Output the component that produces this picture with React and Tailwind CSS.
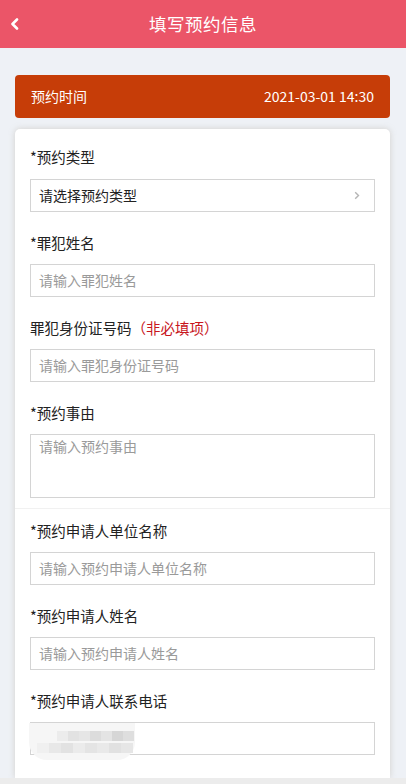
import React from 'react';

const FONT = { fontFamily: '"Noto Sans CJK SC", "Noto Sans", sans-serif' };

const BLUR_TOP = ['#ececec', '#e2e2e2', '#e6e6e6', '#dcdcdc', '#e4e4e4', '#d6d6d6', '#dedede'];
const BLUR_BOTTOM = ['#f0f0f0', '#e8e8e8', '#e2e2e2', '#ebebeb', '#e4e4e4', '#e9e9e9', '#e1e1e1', '#e6e6e6'];

const Field = ({ label, optional, placeholder, className = '' }) => (
  <div className={className}>
    <p className="text-[14.5px] leading-[20px] text-[#222]">
      {label}
      {optional && <span className="text-[#c8161d]">（非必填项）</span>}
    </p>
    <div className="mt-[11px] flex h-[33px] items-center border border-[#d4d4d4] bg-white px-[8px] text-[14px] text-[#9a9a9a]">
      {placeholder}
    </div>
  </div>
);

const App = () => {
  return (
    <div className="flex min-h-[784px] w-[406px] flex-col bg-[#eef1f6]" style={FONT}>
      <header className="relative flex h-[48px] items-center justify-center bg-[#eb5568] text-white">
        <svg className="absolute left-[10px] top-[18px]" width="10" height="12" viewBox="0 0 10 12">
          <path d="M7 1.5 L2.5 6 L7 10.5" fill="none" stroke="white" strokeWidth="2.6" strokeLinecap="round" strokeLinejoin="round" />
        </svg>
        <h1 className="text-[17.5px] font-normal tracking-[0.5px]">填写预约信息</h1>
      </header>

      <div className="px-[15px] pt-[27px]">
        <div className="mr-[1px] flex h-[43px] items-center justify-between rounded-[4px] bg-[#c63d08] px-[16px] text-[14px] text-white">
          <span>预约时间</span>
          <span>2021-03-01 14:30</span>
        </div>
      </div>

      <section className="ml-[15px] mr-[16px] mt-[11px] flex-1 rounded-t-[5px] bg-white shadow-[0_0_6px_rgba(160,150,130,0.35)]">
        <div className="px-[15px] pb-[10px] pt-[18px]">
          <p className="text-[14.5px] leading-[20px] text-[#222]">*预约类型</p>
          <div className="mt-[12px] flex h-[33px] items-center justify-between border border-[#d4d4d4] bg-white pl-[8px] pr-[14px] text-[14px] text-[#222]">
            <span>请选择预约类型</span>
            <svg width="6" height="9" viewBox="0 0 6 9">
              <path d="M1.2 1.2 L4.5 4.5 L1.2 7.8" fill="none" stroke="#b5b5b5" strokeWidth="1.4" />
            </svg>
          </div>

          <Field className="mt-[21px]" label="*罪犯姓名" placeholder="请输入罪犯姓名" />
          <Field className="mt-[21px]" label="罪犯身份证号码" optional placeholder="请输入罪犯身份证号码" />

          <div className="mt-[21px]">
            <p className="text-[14.5px] leading-[20px] text-[#222]">*预约事由</p>
            <div className="mt-[11px] h-[64px] border border-[#d4d4d4] bg-white px-[8px] pt-[1px] text-[14px] text-[#9a9a9a]">
              请输入预约事由
            </div>
          </div>
        </div>

        <div className="border-t border-[#f1f1f1] px-[15px] pt-[12px]">
          <Field label="*预约申请人单位名称" placeholder="请输入预约申请人单位名称" />
          <Field className="mt-[21px]" label="*预约申请人姓名" placeholder="请输入预约申请人姓名" />

          <div className="mt-[21px]">
            <p className="text-[14.5px] leading-[20px] text-[#222]">*预约申请人联系电话</p>
            <div className="mt-[11px] flex h-[33px] items-start border border-[#d4d4d4] bg-white">
              <div className="-ml-[2px] flex h-[37px] w-[106px] flex-col justify-center gap-[2px] rounded-b-[18px] bg-[#f6f6f6] pl-[8px]">
                <div className="flex pl-[20px]">
                  {BLUR_TOP.map((c, i) => (
                    <div key={i} className="h-[10px] w-[11px]" style={{ backgroundColor: c }} />
                  ))}
                </div>
                <div className="flex">
                  {BLUR_BOTTOM.map((c, i) => (
                    <div key={i} className="h-[10px] w-[12px]" style={{ backgroundColor: c }} />
                  ))}
                </div>
              </div>
            </div>
          </div>
        </div>
      </section>

      <div className="h-[6px] bg-[#ececec]" />
    </div>
  );
};

export default App;
